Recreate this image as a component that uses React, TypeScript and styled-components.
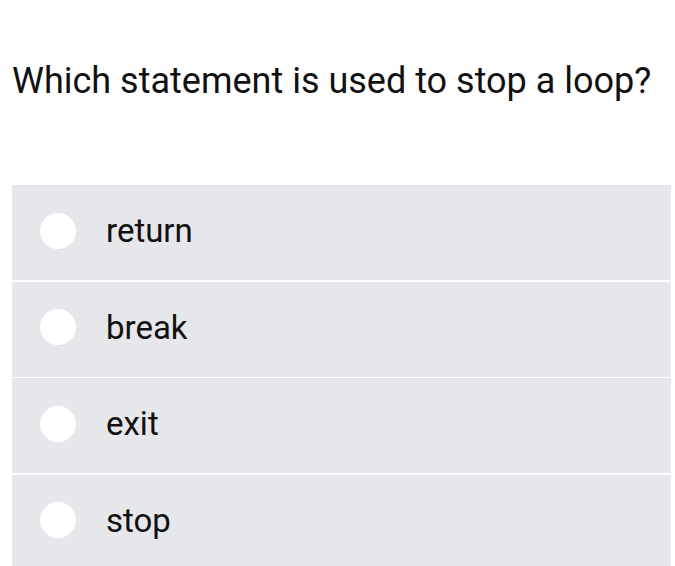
import React, { useState } from 'react';
import styled, { createGlobalStyle } from 'styled-components';

const GlobalStyle = createGlobalStyle`
  body {
    margin: 0;
    background: #ffffff;
    font-family: Roboto, "Liberation Sans", sans-serif;
  }
`

const Wrapper = styled.div`
  padding: 61px 4px 0 12px;
`

const Question = styled.h2`
  margin: 0 0 84px 0;
  font-size: 36px;
  line-height: 40px;
  font-weight: 400;
  color: #111;
`

const OptionList = styled.div`
  display: flex;
  flex-direction: column;
  gap: 1.5px;
`

const OptionRow = styled.label<{ selected: boolean }>`
  display: flex;
  align-items: center;
  gap: 30px;
  height: 95px;
  padding-left: 28px;
  background-color: ${props => props.selected ? '#d7dbe2' : '#e5e7ea'};
  cursor: pointer;
  user-select: none;
`

const Radio = styled.span<{ selected: boolean }>`
  width: 36px;
  height: 36px;
  border-radius: 50%;
  background-color: #ffffff;
  box-sizing: border-box;
  border: ${props => props.selected ? '10px solid #2563eb' : 'none'};
  flex-shrink: 0;
  margin-top: -4px;
`

const OptionText = styled.span`
  font-size: 33px;
  color: #111;
  margin-top: -4px;
`

const options = ['return', 'break', 'exit', 'stop'];

const App = () => {
  const [ picked, setPicked ] = useState<number | null>(null);

  return (
    <Wrapper>
      <GlobalStyle />
      <Question>Which statement is used to stop a loop?</Question>
      <OptionList>
        {options.map((opt, i) => (
          <OptionRow key={opt} selected={picked === i} onClick={() => setPicked(i)}>
            <Radio selected={picked === i} />
            <OptionText>{opt}</OptionText>
          </OptionRow>
        ))}
      </OptionList>
    </Wrapper>
  )
}

export default App;
